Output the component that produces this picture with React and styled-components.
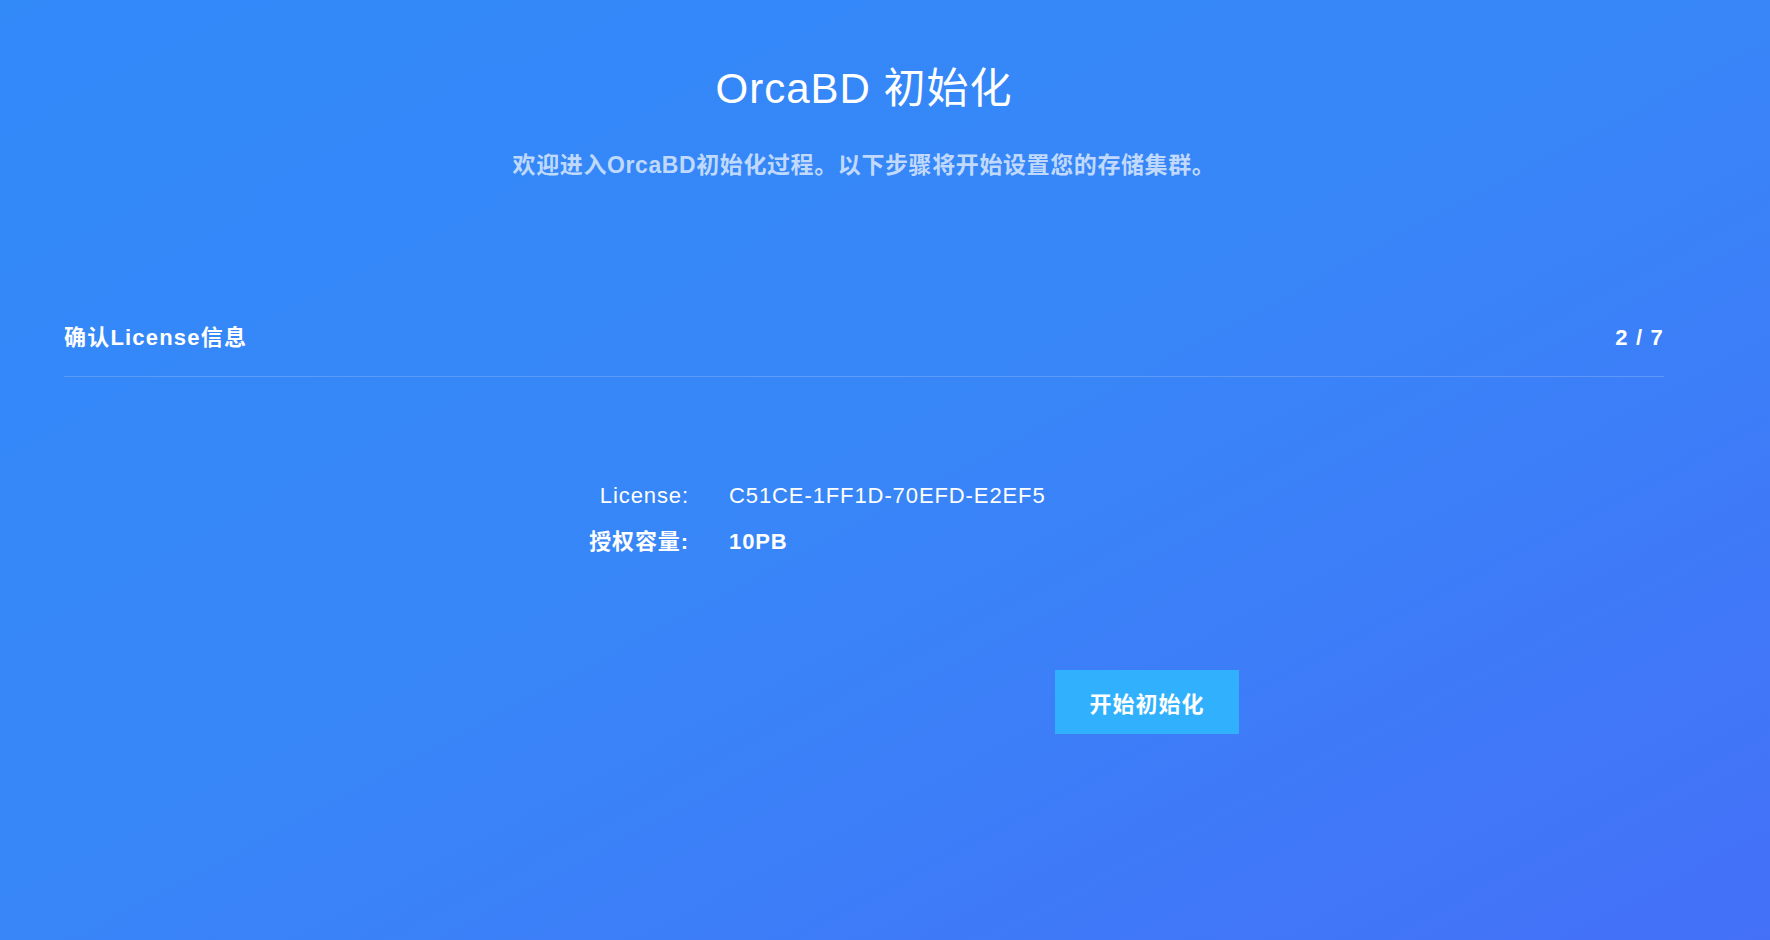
import React from 'react';
import styled, { createGlobalStyle } from 'styled-components';

const GlobalStyle = createGlobalStyle`
html, body {
  margin: 0;
  padding: 0;
}
body {
  font-family: 'Liberation Sans', 'Noto Sans CJK SC', sans-serif;
  color: #fff;
}
`;

const Page = styled.div`
min-height: 100vh;
box-sizing: border-box;
padding: 65px 0 0 64px;
background: linear-gradient(to bottom right, #3289f8 0%, #3886f8 50%, #4470f8 100%);
`;

const Container = styled.div`
width: 1600px;
`;

const Title = styled.h1`
margin: 0;
text-align: center;
font-size: 42px;
line-height: 48px;
font-weight: 400;
letter-spacing: 1px;
`;

const Subtitle = styled.p`
margin: 37px 0 0;
text-align: center;
font-size: 23px;
line-height: 30px;
font-weight: 700;
letter-spacing: 0.6px;
color: rgba(255, 255, 255, 0.7);
`;

const StepHeader = styled.div`
display: flex;
justify-content: space-between;
align-items: center;
margin-top: 143px;
padding-bottom: 23px;
border-bottom: 1px solid rgba(255, 255, 255, 0.18);
font-size: 22px;
line-height: 30px;
font-weight: 700;
letter-spacing: 1.2px;
`;

const InfoGrid = styled.div`
display: grid;
grid-template-columns: 625px auto;
column-gap: 40px;
row-gap: 16px;
margin-top: 104px;
font-size: 22px;
line-height: 30px;
letter-spacing: 0.9px;
`;

const Label = styled.div`
text-align: right;
font-weight: ${p => (p.$cjk ? 700 : 400)};
`;

const Value = styled.div`
font-weight: ${p => (p.$bold ? 700 : 400)};
`;

const ButtonRow = styled.div`
display: flex;
margin-top: 113px;
padding-left: 991px;
`;

const StartButton = styled.button`
width: 184px;
height: 64px;
border: none;
background: #31b1fd;
color: #fff;
font-family: 'Liberation Sans', 'Noto Sans CJK SC', sans-serif;
font-size: 22px;
font-weight: 700;
letter-spacing: 1px;
cursor: pointer;
`;

const App = () => {
  return (
    <Page>
      <GlobalStyle />
      <Container>
        <Title>OrcaBD 初始化</Title>
        <Subtitle>欢迎进入OrcaBD初始化过程。以下步骤将开始设置您的存储集群。</Subtitle>
        <StepHeader>
          <span>确认License信息</span>
          <span>2 / 7</span>
        </StepHeader>
        <InfoGrid>
          <Label>License:</Label>
          <Value>C51CE-1FF1D-70EFD-E2EF5</Value>
          <Label $cjk>授权容量:</Label>
          <Value $bold>10PB</Value>
        </InfoGrid>
        <ButtonRow>
          <StartButton>开始初始化</StartButton>
        </ButtonRow>
      </Container>
    </Page>
  );
};

export default App;
